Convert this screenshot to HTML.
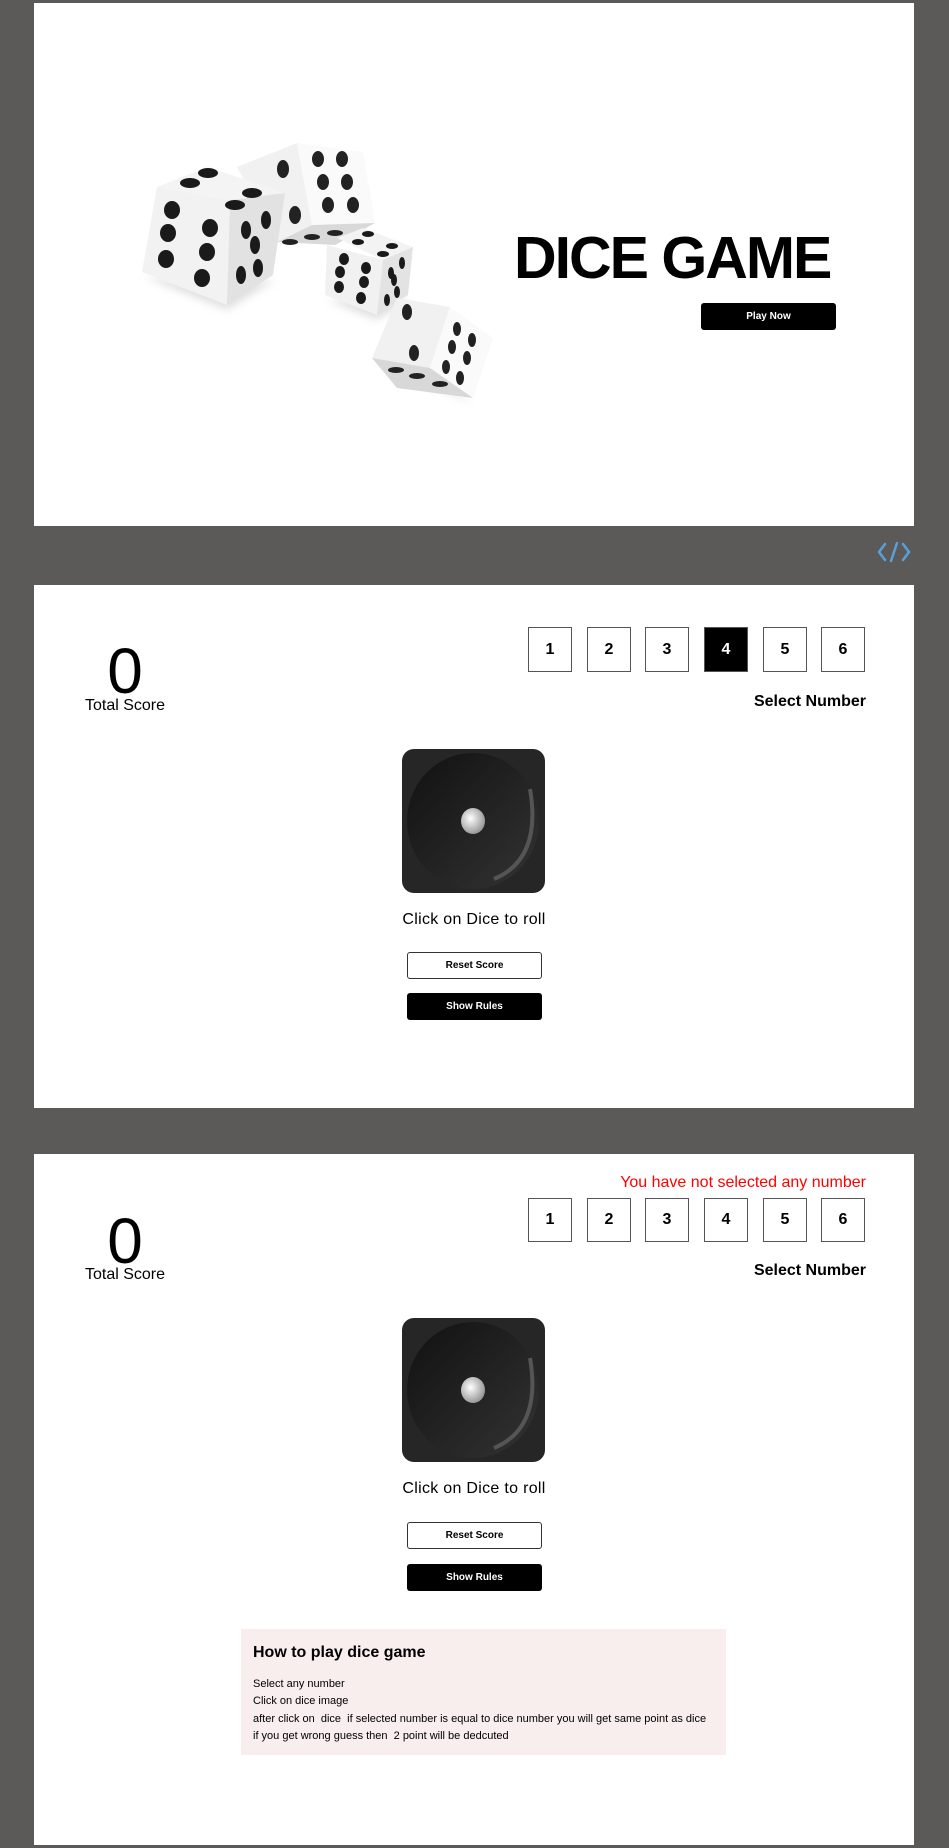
<!DOCTYPE html>
<html><head><meta charset="utf-8"><style>
*{margin:0;padding:0;box-sizing:border-box}
body{width:949px;height:1848px;background:#5b5a59;position:relative;font-family:"Liberation Sans",sans-serif;color:#000;overflow:hidden}
.panel{position:absolute;left:34px;width:880px;background:#fff}
.abs{position:absolute}
.box{position:absolute;width:44px;height:45px;border:1px solid #555;font-weight:bold;font-size:16px;display:flex;align-items:center;justify-content:center;background:#fff}
.box.sel{background:#000;color:#fff}
.btn{position:absolute;width:135px;height:27px;border-radius:3px;font-size:10px;font-weight:bold;display:flex;align-items:center;justify-content:center}
.zero{position:absolute;width:120px;text-align:center;font-size:64px;line-height:64px}
.ts{position:absolute;width:120px;text-align:center;font-size:16px}
.sn{position:absolute;right:48px;font-weight:bold;font-size:16px}
.cl{position:absolute;width:200px;text-align:center;font-size:16px;letter-spacing:.3px}
</style></head><body>

<div class="panel" style="top:3px;height:523px">
<svg class="abs" style="left:96px;top:132px" width="370" height="280" viewBox="0 0 370 280">
<defs><filter id="sh"><feGaussianBlur stdDeviation="4"/></filter></defs>
<g fill="#ccc" opacity=".6" filter="url(#sh)"><polygon points="14,142 97,175 145,145 100,150"/><polygon points="197,165 247,185 280,165"/><polygon points="245,228 343,268 300,240"/></g>
<polygon points="107,32 167,8 182,90 147,107" fill="#f1f1f1"/>
<polygon points="167,8 233,17 245,88 182,90" fill="#fafafa"/>
<polygon points="147,107 182,90 245,88 205,110" fill="#d9d9d9"/>
<g fill="#222"><ellipse cx="153" cy="34" rx="6" ry="9"/><ellipse cx="165" cy="80" rx="6" ry="9"/><ellipse cx="188" cy="24" rx="6" ry="8"/><ellipse cx="212" cy="24" rx="6" ry="8"/><ellipse cx="193" cy="47" rx="6" ry="8"/><ellipse cx="217" cy="47" rx="6" ry="8"/><ellipse cx="198" cy="70" rx="6" ry="8"/><ellipse cx="223" cy="70" rx="6" ry="8"/><ellipse cx="160" cy="107" rx="8" ry="3"/><ellipse cx="182" cy="102" rx="8" ry="3"/><ellipse cx="205" cy="98" rx="8" ry="3"/></g>
<polygon points="27,52 78,32 155,58 100,65" fill="#f4f4f4"/>
<polygon points="27,52 100,65 97,170 12,137" fill="#f2f2f2"/>
<polygon points="100,65 155,58 143,140 97,170" fill="#e2e2e2"/>
<g fill="#1a1a1a"><ellipse cx="60" cy="48" rx="10" ry="5"/><ellipse cx="78" cy="38" rx="10" ry="5"/><ellipse cx="105" cy="70" rx="10" ry="5"/><ellipse cx="122" cy="58" rx="10" ry="5"/>
<ellipse cx="42" cy="75" rx="8" ry="9"/><ellipse cx="38" cy="98" rx="8" ry="9"/><ellipse cx="36" cy="124" rx="8" ry="9"/><ellipse cx="80" cy="93" rx="8" ry="9"/><ellipse cx="77" cy="117" rx="8" ry="9"/><ellipse cx="72" cy="143" rx="8" ry="9"/>
<ellipse cx="116" cy="95" rx="5" ry="9"/><ellipse cx="136" cy="85" rx="5" ry="9"/><ellipse cx="125" cy="110" rx="5" ry="9"/><ellipse cx="111" cy="140" rx="5" ry="9"/><ellipse cx="128" cy="133" rx="5" ry="9"/></g>
<polygon points="207,103 233,93 283,112 253,125" fill="#f3f3f3"/>
<polygon points="197,110 253,125 247,180 195,160" fill="#f1f1f1"/>
<polygon points="253,125 283,112 278,160 247,180" fill="#e3e3e3"/>
<g fill="#1a1a1a"><ellipse cx="228" cy="107" rx="6" ry="3"/><ellipse cx="238" cy="99" rx="6" ry="3"/><ellipse cx="253" cy="119" rx="6" ry="3"/><ellipse cx="262" cy="111" rx="6" ry="3"/>
<ellipse cx="214" cy="124" rx="5" ry="6"/><ellipse cx="210" cy="137" rx="5" ry="6"/><ellipse cx="209" cy="152" rx="5" ry="6"/><ellipse cx="236" cy="133" rx="5" ry="6"/><ellipse cx="234" cy="147" rx="5" ry="6"/><ellipse cx="231" cy="163" rx="5" ry="6"/>
<ellipse cx="261" cy="138" rx="3" ry="6"/><ellipse cx="272" cy="128" rx="3" ry="6"/><ellipse cx="264" cy="145" rx="3" ry="6"/><ellipse cx="257" cy="165" rx="3" ry="6"/><ellipse cx="267" cy="157" rx="3" ry="6"/></g>
<polygon points="267,163 320,172 300,233 242,223" fill="#f0f1f0"/>
<polygon points="320,172 363,203 343,263 300,233" fill="#fafafa"/>
<polygon points="242,223 300,233 343,263 267,253" fill="#d8d8d8"/>
<g fill="#222"><ellipse cx="277" cy="177" rx="5" ry="8"/><ellipse cx="284" cy="218" rx="5" ry="8"/>
<ellipse cx="327" cy="194" rx="4" ry="7"/><ellipse cx="342" cy="205" rx="4" ry="7"/><ellipse cx="322" cy="212" rx="4" ry="7"/><ellipse cx="337" cy="223" rx="4" ry="7"/><ellipse cx="316" cy="232" rx="4" ry="7"/><ellipse cx="330" cy="243" rx="4" ry="7"/>
<ellipse cx="266" cy="235" rx="8" ry="3"/><ellipse cx="287" cy="241" rx="8" ry="3"/><ellipse cx="310" cy="249" rx="8" ry="3"/></g>
</svg>
<div class="abs" style="left:480px;top:222px;font-size:59px;font-weight:bold;letter-spacing:-2px;line-height:66px">DICE GAME</div>
<div class="btn" style="left:667px;top:300px;background:#000;color:#fff">Play Now</div>
</div>

<svg class="abs" style="left:877px;top:541px" width="34" height="22" viewBox="0 0 34 22"><g fill="none" stroke="#5aa0d8" stroke-width="2.5" stroke-linecap="round"><path d="M8 3 L2 11 L8 19"/><path d="M26 3 L32 11 L26 19"/><path d="M20 2 L14 20"/></g></svg>

<div class="panel" style="top:585px;height:523px">
<div class="box" style="left:494px;top:42px">1</div><div class="box" style="left:553px;top:42px">2</div><div class="box" style="left:611px;top:42px">3</div><div class="box sel" style="left:670px;top:42px">4</div><div class="box" style="left:729px;top:42px">5</div><div class="box" style="left:787px;top:42px">6</div>
<div class="zero" style="left:31px;top:54px">0</div>
<div class="ts" style="left:31px;top:112px">Total Score</div>
<div class="sn" style="top:108px">Select Number</div>
<svg class="abs" style="left:368px;top:164px" width="143" height="144" viewBox="0 0 143 144"><defs><radialGradient id="p" cx=".4" cy=".4" r=".6"><stop offset="0" stop-color="#fff"/><stop offset="1" stop-color="#999"/></radialGradient><linearGradient id="c" x1="0" y1="0" x2="1" y2="1"><stop offset="0" stop-color="#111"/><stop offset="1" stop-color="#333"/></linearGradient></defs><rect width="143" height="144" rx="12" fill="#262626"/><ellipse cx="71" cy="72" rx="66" ry="68" fill="url(#c)"/><path d="M128 40 Q140 110 92 130" stroke="#555" stroke-width="4" fill="none"/><ellipse cx="71" cy="72" rx="12" ry="13" fill="url(#p)"/></svg>
<div class="cl" style="left:340px;top:326px">Click on Dice to roll</div>
<div class="btn" style="left:373px;top:367px;border:1px solid #333">Reset Score</div>
<div class="btn" style="left:373px;top:408px;background:#000;color:#fff">Show Rules</div>
</div>

<div class="panel" style="top:1154px;height:691px">
<div class="abs" style="right:48px;top:20px;color:#f00;font-size:16px">You have not selected any number</div>
<div class="box" style="left:494px;top:44px;height:44px">1</div><div class="box" style="left:553px;top:44px;height:44px">2</div><div class="box" style="left:611px;top:44px;height:44px">3</div><div class="box" style="left:670px;top:44px;height:44px">4</div><div class="box" style="left:729px;top:44px;height:44px">5</div><div class="box" style="left:787px;top:44px;height:44px">6</div>
<div class="zero" style="left:31px;top:55px">0</div>
<div class="ts" style="left:31px;top:112px">Total Score</div>
<div class="sn" style="top:108px">Select Number</div>
<svg class="abs" style="left:368px;top:164px" width="143" height="144" viewBox="0 0 143 144"><rect width="143" height="144" rx="12" fill="#262626"/><ellipse cx="71" cy="72" rx="66" ry="68" fill="url(#c)"/><path d="M128 40 Q140 110 92 130" stroke="#555" stroke-width="4" fill="none"/><ellipse cx="71" cy="72" rx="12" ry="13" fill="url(#p)"/></svg>
<div class="cl" style="left:340px;top:326px">Click on Dice to roll</div>
<div class="btn" style="left:373px;top:368px;border:1px solid #333">Reset Score</div>
<div class="btn" style="left:373px;top:410px;background:#000;color:#fff">Show Rules</div>
<div class="abs" style="left:207px;top:475px;width:485px;height:126px;background:#f9eeee;padding:12px 12px">
<div style="font-weight:bold;font-size:16px;line-height:22px;margin-top:1px">How to play dice game</div>
<div style="font-size:11px;line-height:17.3px;margin-top:12px">Select any number<br>Click on dice image<br>after click on &nbsp;dice &nbsp;if selected number is equal to dice number you will get same point as dice<br>if you get wrong guess then &nbsp;2 point will be dedcuted</div>
</div>
</div>
</body></html>
